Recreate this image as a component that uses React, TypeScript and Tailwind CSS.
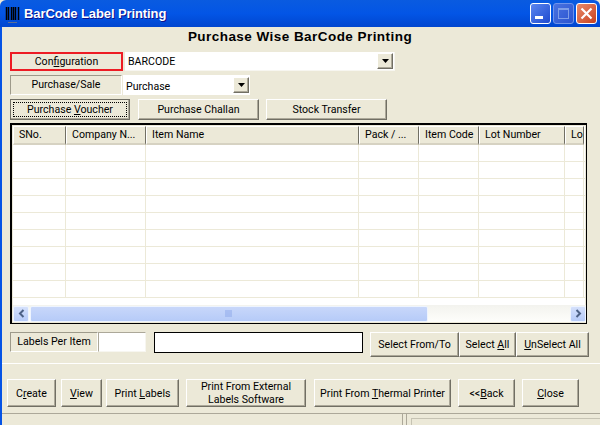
import React from 'react';

const raised =
  'border border-t-white border-l-white border-r-[#716f64] border-b-[#716f64] shadow-[inset_-1px_-1px_0_#aca899]';

function U({ children }: { children: React.ReactNode }) {
  return <span className="underline underline-offset-1">{children}</span>;
}

function Btn({ className, children }: { className: string; children: React.ReactNode }) {
  return (
    <div className={`flex items-center justify-center text-center leading-[13px] bg-[#ece9d8] ${raised} ${className}`}>
      <span>{children}</span>
    </div>
  );
}

function ComboArrow() {
  return (
    <div className={`w-[16px] h-[16px] flex items-center justify-center bg-[#ece9d8] ${raised}`}>
      <svg width="7" height="4" viewBox="0 0 7 4">
        <path d="M0 0h7L3.5 4z" fill="#000" />
      </svg>
    </div>
  );
}

const columns = [
  { label: 'SNo.', width: 'w-[53px]' },
  { label: 'Company N...', width: 'w-[80px]' },
  { label: 'Item Name', width: 'w-[213px]' },
  { label: 'Pack / ...', width: 'w-[60px]' },
  { label: 'Item Code', width: 'w-[60px]' },
  { label: 'Lot Number', width: 'w-[86px]' },
  { label: 'Lo', width: 'w-[19px]' },
];

const rows = Array.from({ length: 9 }, (_, i) => i);

function Grid() {
  return (
    <div className="mt-[3px] ml-[10px] w-[577px] h-[201px] border border-black border-t-2 border-l-2 bg-white flex flex-col overflow-hidden shadow-[inset_0_0_0_1px_#ece9d8]">
      <div className="flex h-[19px] mt-px ml-px">
        {columns.map((c) => (
          <div
            key={c.label}
            className={`${c.width} shrink-0 h-[19px] pl-[5px] flex items-center whitespace-nowrap overflow-hidden bg-[#ece9d8] border-r border-r-[#716f64] border-l border-l-white border-t border-t-white border-b-2 border-b-[#d6d2c2]`}
          >
            {c.label}
          </div>
        ))}
      </div>
      <div className="flex-1 ml-px">
        {rows.map((r) => (
          <div key={r} className="flex h-[17px] border-b border-b-[#ece9d8]">
            {columns.map((c) => (
              <div key={c.label} className={`${c.width} shrink-0 border-r border-r-[#ece9d8]`} />
            ))}
          </div>
        ))}
      </div>
      <div className="flex h-[17px] ml-px mb-px items-center bg-gradient-to-b from-[#f3f3ee] to-[#fefefb]">
        <ScrollBtn dir="left" />
        <div className="ml-px w-[398px] h-[16px] flex items-center justify-center rounded-[2px] border border-[#eef4fe] bg-gradient-to-b from-[#c8d7fa] to-[#b6cbf8]">
          <svg width="8" height="7" viewBox="0 0 8 7">
            <path d="M0 0v7M2 0v7M4 0v7M6 0v7" stroke="#8ea9ea" strokeWidth="1" />
          </svg>
        </div>
        <div className="flex-1" />
        <ScrollBtn dir="right" />
      </div>
    </div>
  );
}

function ScrollBtn({ dir }: { dir: 'left' | 'right' }) {
  return (
    <div className="w-[16px] h-[16px] flex items-center justify-center rounded-[2px] border border-[#eef4fe] bg-gradient-to-b from-[#d4e0fb] to-[#b6cbf8]">
      <svg width="7" height="9" viewBox="0 0 7 9">
        <path
          d={dir === 'left' ? 'M5.500 1L2 4.500L5.500 8' : 'M1.500 1L5 4.500L1.500 8'}
          fill="none"
          stroke="#4d6185"
          strokeWidth="2"
        />
      </svg>
    </div>
  );
}

export default function App() {
  return (
    <div className="w-[600px] h-[425px] overflow-hidden bg-[#ece9d8] text-black text-[10.6px] font-['Roboto',sans-serif] flex flex-col">
      {/* title bar */}
      <div className="h-[27px] shrink-0 flex items-center pl-[4px] pr-[3px] bg-gradient-to-b from-[#0a5be0] via-[#0355e6] to-[#0146cf] rounded-t-[6px]">
        <svg width="18" height="20" viewBox="0 0 18 20" className="shrink-0">
          <path d="M2.500 3v13M4.500 3v13M7.500 3v13M9.500 3v13M11.500 3v13M14.500 3v13" stroke="#000" strokeWidth="1.500" />
          <path d="M4 18.500h9" stroke="#5b6f96" strokeWidth="1" />
        </svg>
        <span className="ml-[2px] text-white font-bold text-[13px] tracking-[-0.1px] font-['Liberation_Sans',sans-serif] [text-shadow:1px_1px_0_#0f1089]">
          BarCode Label Printing
        </span>
        <div className="ml-auto flex gap-[2px]">
          <div className="w-[21px] h-[21px] rounded-[3px] border border-white bg-gradient-to-br from-[#5b85ef] to-[#1f49cf] flex items-end pl-[4px] pb-[4px]">
            <div className="w-[8px] h-[3px] bg-white" />
          </div>
          <div className="w-[21px] h-[21px] rounded-[3px] border border-[#6f93ea] bg-gradient-to-br from-[#4a72e0] to-[#2b54d0] flex items-center justify-center">
            <div className="w-[11px] h-[11px] border border-[#7f9ee8] border-t-2" />
          </div>
          <div className="w-[21px] h-[21px] rounded-[3px] border border-white bg-gradient-to-br from-[#e88a6a] to-[#c8401a] flex items-center justify-center">
            <svg width="13" height="13" viewBox="0 0 13 13">
              <path d="M1.500 1.500l10 10M11.500 1.500l-10 10" stroke="#fff" strokeWidth="2.200" />
            </svg>
          </div>
        </div>
      </div>

      {/* client area */}
      <div className="flex-1 border-l-[3px] border-l-[#0553e5] -ml-px flex flex-col">
        <div className="h-[25px] pr-[2px] pb-[4px] flex items-center justify-center font-bold text-[13.500px] tracking-[0.45px] font-['Liberation_Sans',sans-serif]">
          Purchase Wise BarCode Printing
        </div>

        <div className="flex h-[19px] ml-[8px]">
          <div className="w-[113px] h-[19px] flex items-center justify-center border-2 border-[#ed1c24]">
            <span className="mt-px">
              Con<U>f</U>iguration
            </span>
          </div>
          <div className="ml-[2px] w-[270px] h-[19px] flex items-center justify-between bg-white pl-[3px] pr-px border-b border-r border-b-[#f7f6f0] border-r-[#f7f6f0]">
            <span className="mt-px">BARCODE</span>
            <ComboArrow />
          </div>
        </div>

        <div className="flex h-[20px] mt-[4px] ml-[8px]">
          <div className="w-[112px] h-[20px] flex items-center justify-center border-t border-l border-t-[#9d9a8a] border-l-[#9d9a8a] border-r border-b border-r-white border-b-white">
            Purchase/Sale
          </div>
          <div className="ml-px w-[127px] h-[20px] flex items-center justify-between bg-white pl-[3px] pr-px">
            <span className="mt-[3px]">Purchase</span>
            <ComboArrow />
          </div>
        </div>

        <div className="flex h-[21px] mt-[4px] ml-[8px]">
          <div className="w-[120px] h-[21px] border border-[#716f64] p-[2px] shadow-[inset_-1px_-1px_0_#aca899]">
            <div className="h-full flex items-center justify-center border border-dotted border-black">
              <span>
                Purchase <U>V</U>oucher
              </span>
            </div>
          </div>
          <Btn className="ml-[8px] w-[121px] h-[21px]">Purchase Challan</Btn>
          <Btn className="ml-[7px] w-[121px] h-[21px]">Stock Transfer</Btn>
        </div>

        <div className="-ml-[2px]">
          <Grid />
        </div>

        <div className="flex mt-[8px] ml-[8px] h-[25px]">
          <div className="w-[88px] h-[20px] flex items-center justify-center border-t border-l border-t-[#9d9a8a] border-l-[#9d9a8a] border-r border-b border-r-white border-b-white">
            Labels Per Item
          </div>
          <div className="w-[48px] h-[20px] bg-white border border-[#f7f6f0] border-t-[#aca899] border-l-[#aca899]" />
          <div className="ml-[8px] w-[209px] h-[21px] bg-white border border-black" />
          <Btn className="ml-[7px] w-[89px] h-[25px]">Select From/To</Btn>
          <Btn className="w-[57px] h-[25px]">
            Select <U>A</U>ll
          </Btn>
          <Btn className="w-[73px] h-[25px]">
            <U>U</U>nSelect All
          </Btn>
        </div>

        <div className="mt-[6px] h-px bg-white" />

        <div className="flex mt-[15px] ml-[5px] h-[28px]">
          <Btn className="w-[49px] h-[28px]">
            C<U>r</U>eate
          </Btn>
          <Btn className="ml-[5px] w-[41px] h-[28px]">
            <U>V</U>iew
          </Btn>
          <Btn className="ml-[4px] w-[73px] h-[28px]">
            Print <U>L</U>abels
          </Btn>
          <Btn className="ml-[7px] w-[120px] h-[28px]">
            Print From External
            <br />
            Labels Software
          </Btn>
          <Btn className="ml-[8px] w-[137px] h-[28px]">
            Print From <U>T</U>hermal Printer
          </Btn>
          <Btn className="ml-[7px] w-[57px] h-[28px]">
            {'<<'}
            <U>B</U>ack
          </Btn>
          <Btn className="ml-[7px] w-[57px] h-[28px]">
            <U>C</U>lose
          </Btn>
        </div>

        {/* status bar */}
        <div className="mt-[6px] flex-1 flex border-t border-t-[#aca899]">
          <div className="w-[401px] border-r border-r-[#aca899]" />
          <div className="ml-[3px] flex-1 border-l border-l-[#aca899] pl-[4px] pt-[4px]">
            <div className="h-full border-l border-t border-[#c6c3b3]" />
          </div>
        </div>
      </div>
    </div>
  );
}
